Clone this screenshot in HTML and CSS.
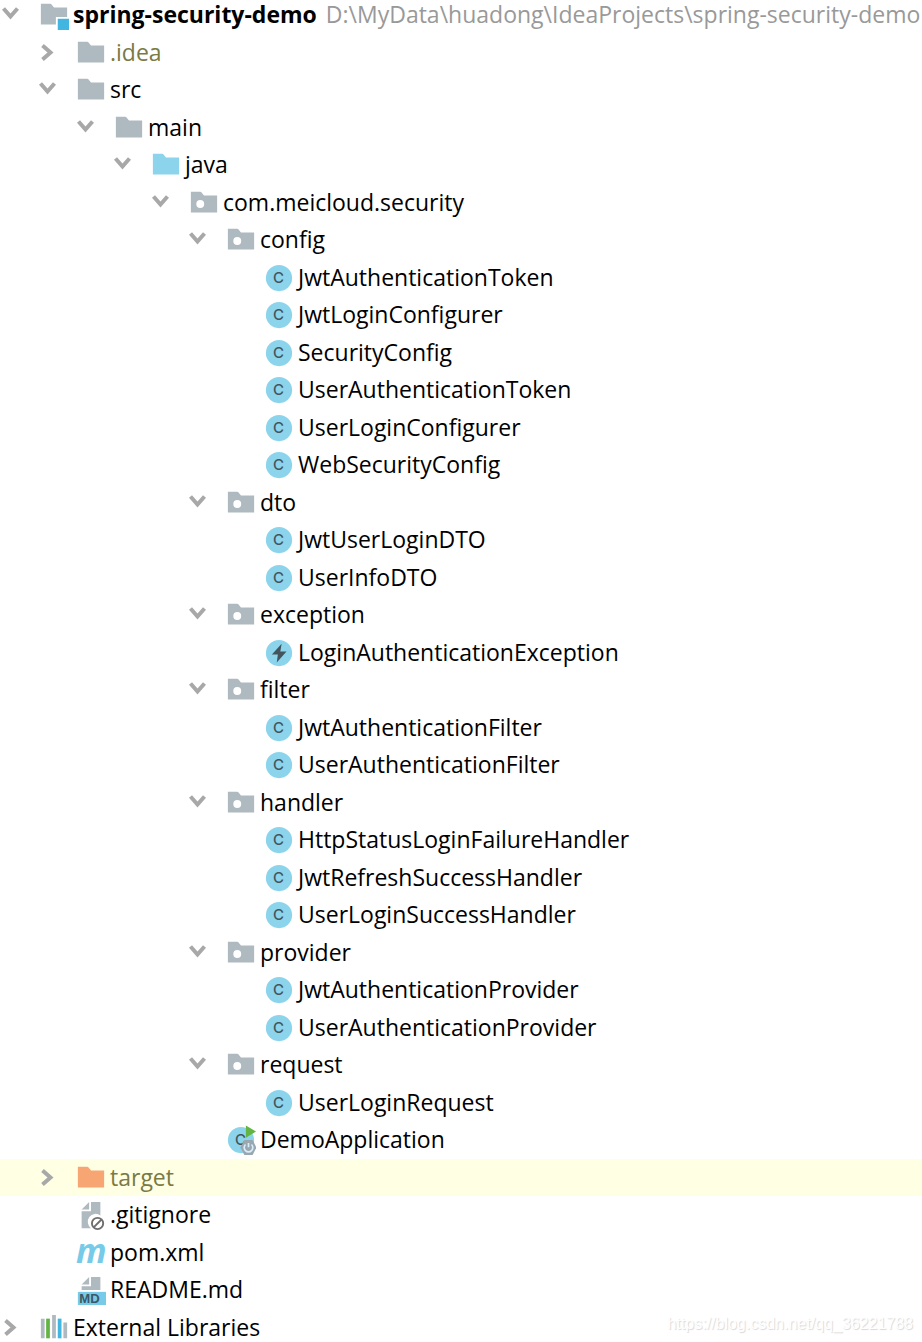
FILE: index.html
```
<!DOCTYPE html>
<html lang="en">
<head>
  <meta charset="UTF-8">
  <title>spring-security-demo</title>
  <link rel="stylesheet" href="styles.css">
</head>
<body>
  <svg class="sprite" aria-hidden="true">
    <symbol id="down" viewBox="0 0 20 20"><path d="M3.5 3.5 10.5 11.5 17.5 3.5" fill="none" stroke="#a8a8a8" stroke-width="4"/></symbol>
    <symbol id="right" viewBox="0 0 20 20"><path d="M5.5 2.5 13.5 9.5 5.5 16.5" fill="none" stroke="#a8a8a8" stroke-width="4"/></symbol>
    <symbol id="folder" viewBox="0 0 16 16"><path d="M1 13h14V4H8L6.7 2.4Q6.4 2 6 2H1z" fill="currentColor"/></symbol>
    <symbol id="module" viewBox="0 0 16 16">
      <path d="M1 13h8V9h6V4H8L6.7 2.4Q6.4 2 6 2H1z" fill="#afb9c0"/>
      <path d="M10 10h6v6h-6z" fill="#40b6e0"/>
    </symbol>
    <symbol id="package" viewBox="0 0 16 16">
      <path d="M1 13h14V4H8L6.7 2.4Q6.4 2 6 2H1z" fill="#afb9c0"/>
      <circle cx="6" cy="8.5" r="2.1" fill="#fff"/>
    </symbol>
    <symbol id="class" viewBox="0 0 16 16">
      <circle cx="8" cy="8" r="7" fill="#8cd4ec"/>
      <text x="7.8" y="10.9" class="letter">C</text>
    </symbol>
    <symbol id="exception" viewBox="0 0 16 16">
      <circle cx="8" cy="8" r="7" fill="#8cd4ec"/>
      <path d="M9.4 3 4.2 8.8h3.2L6.8 13 12 7.2H8.7z" fill="#44545c"/>
    </symbol>
    <symbol id="app" viewBox="0 0 16 16">
      <circle cx="8" cy="8" r="7" fill="#8cd4ec"/>
      <text x="7.8" y="10.9" class="letter">C</text>
      <path d="M10.6.2 16 3.4 10.6 6.8z" fill="#62b543"/>
      <path d="M9.8 8h4.4L16.2 12l-2 4H9.8l-2.2-4z" fill="#9aa7b0"/>
      <path d="M10.4 10.4a2.3 2.3 0 1 0 3.2 0M12 9.6v2.2" fill="none" stroke="#d5eefa" stroke-width=".9"/>
    </symbol>
    <symbol id="ignore" viewBox="0 0 16 16">
      <path d="M7 1v4H3zM8 1h5v7.2a4 4 0 0 0-5 6.8H3V6h5z" fill="#afb9c0"/>
      <circle cx="11.5" cy="12.5" r="3" fill="#fff" stroke="#6e6e6e"/>
      <path d="M9.4 14.6l4.2-4.2" stroke="#6e6e6e"/>
    </symbol>
    <symbol id="maven" viewBox="0 0 16 16"><text x="8.2" y="13.4" class="maven">m</text></symbol>
    <symbol id="markdown" viewBox="0 0 16 16">
      <path d="M7 1v4H3zM8 1h5v7H3V6h5z" fill="#afb9c0"/>
      <path d="M1 9h15v7H1z" fill="#77cbe8"/>
      <text x="7.2" y="15" class="md">MD</text>
    </symbol>
    <symbol id="libs" viewBox="0 0 16 16">
      <path d="M1 3h2v10.5H1zM7 1h2v12.5H7zM13 5h2v8.5h-2z" fill="#afb9c0"/>
      <path d="M3.8 3h2v10.5h-2z" fill="#62b543"/>
      <path d="M10 3h2v10.5h-2z" fill="#40b6e0"/>
    </symbol>
  </svg>

  <main class="project">
    <ul class="tree">
      <li class="row l0"><button class="toggle" aria-label="Collapse"><svg><use href="#down"/></svg></button><svg class="icon"><use href="#module"/></svg><b class="name">spring-security-demo</b><span class="name path">D:\MyData\huadong\IdeaProjects\spring-security-demo</span></li>
      <li class="row l1"><button class="toggle" aria-label="Expand"><svg><use href="#right"/></svg></button><svg class="icon"><use href="#folder"/></svg><span class="name excluded">.idea</span></li>
      <li class="row l1"><button class="toggle" aria-label="Collapse"><svg><use href="#down"/></svg></button><svg class="icon"><use href="#folder"/></svg><span class="name">src</span></li>
      <li class="row l2"><button class="toggle" aria-label="Collapse"><svg><use href="#down"/></svg></button><svg class="icon"><use href="#folder"/></svg><span class="name">main</span></li>
      <li class="row l3"><button class="toggle" aria-label="Collapse"><svg><use href="#down"/></svg></button><svg class="icon source"><use href="#folder"/></svg><span class="name">java</span></li>
      <li class="row l4"><button class="toggle" aria-label="Collapse"><svg><use href="#down"/></svg></button><svg class="icon"><use href="#package"/></svg><span class="name">com.meicloud.security</span></li>
      <li class="row l5"><button class="toggle" aria-label="Collapse"><svg><use href="#down"/></svg></button><svg class="icon"><use href="#package"/></svg><span class="name">config</span></li>
      <li class="row leaf l6"><svg class="icon"><use href="#class"/></svg><span class="name">JwtAuthenticationToken</span></li>
      <li class="row leaf l6"><svg class="icon"><use href="#class"/></svg><span class="name">JwtLoginConfigurer</span></li>
      <li class="row leaf l6"><svg class="icon"><use href="#class"/></svg><span class="name">SecurityConfig</span></li>
      <li class="row leaf l6"><svg class="icon"><use href="#class"/></svg><span class="name">UserAuthenticationToken</span></li>
      <li class="row leaf l6"><svg class="icon"><use href="#class"/></svg><span class="name">UserLoginConfigurer</span></li>
      <li class="row leaf l6"><svg class="icon"><use href="#class"/></svg><span class="name">WebSecurityConfig</span></li>
      <li class="row l5"><button class="toggle" aria-label="Collapse"><svg><use href="#down"/></svg></button><svg class="icon"><use href="#package"/></svg><span class="name">dto</span></li>
      <li class="row leaf l6"><svg class="icon"><use href="#class"/></svg><span class="name">JwtUserLoginDTO</span></li>
      <li class="row leaf l6"><svg class="icon"><use href="#class"/></svg><span class="name">UserInfoDTO</span></li>
      <li class="row l5"><button class="toggle" aria-label="Collapse"><svg><use href="#down"/></svg></button><svg class="icon"><use href="#package"/></svg><span class="name">exception</span></li>
      <li class="row leaf l6"><svg class="icon"><use href="#exception"/></svg><span class="name">LoginAuthenticationException</span></li>
      <li class="row l5"><button class="toggle" aria-label="Collapse"><svg><use href="#down"/></svg></button><svg class="icon"><use href="#package"/></svg><span class="name">filter</span></li>
      <li class="row leaf l6"><svg class="icon"><use href="#class"/></svg><span class="name">JwtAuthenticationFilter</span></li>
      <li class="row leaf l6"><svg class="icon"><use href="#class"/></svg><span class="name">UserAuthenticationFilter</span></li>
      <li class="row l5"><button class="toggle" aria-label="Collapse"><svg><use href="#down"/></svg></button><svg class="icon"><use href="#package"/></svg><span class="name">handler</span></li>
      <li class="row leaf l6"><svg class="icon"><use href="#class"/></svg><span class="name">HttpStatusLoginFailureHandler</span></li>
      <li class="row leaf l6"><svg class="icon"><use href="#class"/></svg><span class="name">JwtRefreshSuccessHandler</span></li>
      <li class="row leaf l6"><svg class="icon"><use href="#class"/></svg><span class="name">UserLoginSuccessHandler</span></li>
      <li class="row l5"><button class="toggle" aria-label="Collapse"><svg><use href="#down"/></svg></button><svg class="icon"><use href="#package"/></svg><span class="name">provider</span></li>
      <li class="row leaf l6"><svg class="icon"><use href="#class"/></svg><span class="name">JwtAuthenticationProvider</span></li>
      <li class="row leaf l6"><svg class="icon"><use href="#class"/></svg><span class="name">UserAuthenticationProvider</span></li>
      <li class="row l5"><button class="toggle" aria-label="Collapse"><svg><use href="#down"/></svg></button><svg class="icon"><use href="#package"/></svg><span class="name">request</span></li>
      <li class="row leaf l6"><svg class="icon"><use href="#class"/></svg><span class="name">UserLoginRequest</span></li>
      <li class="row leaf l5"><svg class="icon"><use href="#app"/></svg><span class="name">DemoApplication</span></li>
      <li class="row l1 highlighted"><button class="toggle" aria-label="Expand"><svg><use href="#right"/></svg></button><svg class="icon target"><use href="#folder"/></svg><span class="name excluded">target</span></li>
      <li class="row leaf l1"><svg class="icon"><use href="#ignore"/></svg><span class="name">.gitignore</span></li>
      <li class="row leaf l1"><svg class="icon"><use href="#maven"/></svg><span class="name">pom.xml</span></li>
      <li class="row leaf l1"><svg class="icon"><use href="#markdown"/></svg><span class="name">README.md</span></li>
      <li class="row l0"><button class="toggle" aria-label="Expand"><svg><use href="#right"/></svg></button><svg class="icon"><use href="#libs"/></svg><span class="name">External Libraries</span></li>
    </ul>
    <div class="watermark">https://blog.csdn.net/qq_36221788</div>
  </main>
</body>
</html>
```

FILE: styles.css
```
:root {
  --text: #000000;
  --text-grey: #999999;
  --text-olive: #7a7a43;
  --folder: #afb9c0;
  --source: #8cd4ec;
  --target: #f7a572;
  --highlight: #ffffe4;
}

* {
  margin: 0;
  padding: 0;
  box-sizing: border-box;
}

body {
  font-family: "Open Sans", "Noto Sans", sans-serif;
  font-size: 23px;
  line-height: 26px;
  color: var(--text);
  background: #ffffff;
}

.sprite {
  display: none;
}

.project {
  position: relative;
  height: 100vh;
  overflow: hidden;
}

/* the list is scrolled a few pixels past its first row */
.tree {
  list-style: none;
  margin-top: -4px;
}

.row {
  display: flex;
  align-items: center;
  height: 37px;
  white-space: nowrap;
}

.row:nth-child(odd) {
  height: 38px;
}

.l1 { padding-left: 37px; }
.l2 { padding-left: 75px; }
.l3 { padding-left: 112px; }
.l4 { padding-left: 150px; }
.l5 { padding-left: 187px; }
.l6 { padding-left: 225px; }

.toggle {
  flex: none;
  width: 20px;
  height: 20px;
  border: none;
  background: none;
  cursor: pointer;
}

.toggle svg {
  display: block;
  width: 20px;
  height: 20px;
}

.icon {
  flex: none;
  width: 30px;
  height: 30px;
  margin-left: 19px;
  margin-right: 4px;
  color: var(--folder);
}

.leaf .icon {
  margin-left: 39px;
}

.icon.source {
  color: var(--source);
}

.icon.target {
  color: var(--target);
}

.name {
  padding-bottom: 2px;
}

.path {
  margin-left: 9px;
  color: var(--text-grey);
}

.excluded {
  color: var(--text-olive);
}

.highlighted {
  background: var(--highlight);
}

.letter {
  font: 500 8px "Inter", sans-serif;
  text-anchor: middle;
  fill: #44545c;
}

.maven {
  font: italic 700 18px "Open Sans", sans-serif;
  text-anchor: middle;
  fill: #77cbe8;
}

.md {
  font: 700 7px "Liberation Sans", Arial, sans-serif;
  text-anchor: middle;
  fill: #3c5866;
}

.watermark {
  position: absolute;
  right: 9px;
  bottom: 6px;
  font: 16px/24px "Liberation Sans", Arial, sans-serif;
  color: #ffffff;
  text-shadow: 1px 1px 1px #d8d8d8;
}
```
